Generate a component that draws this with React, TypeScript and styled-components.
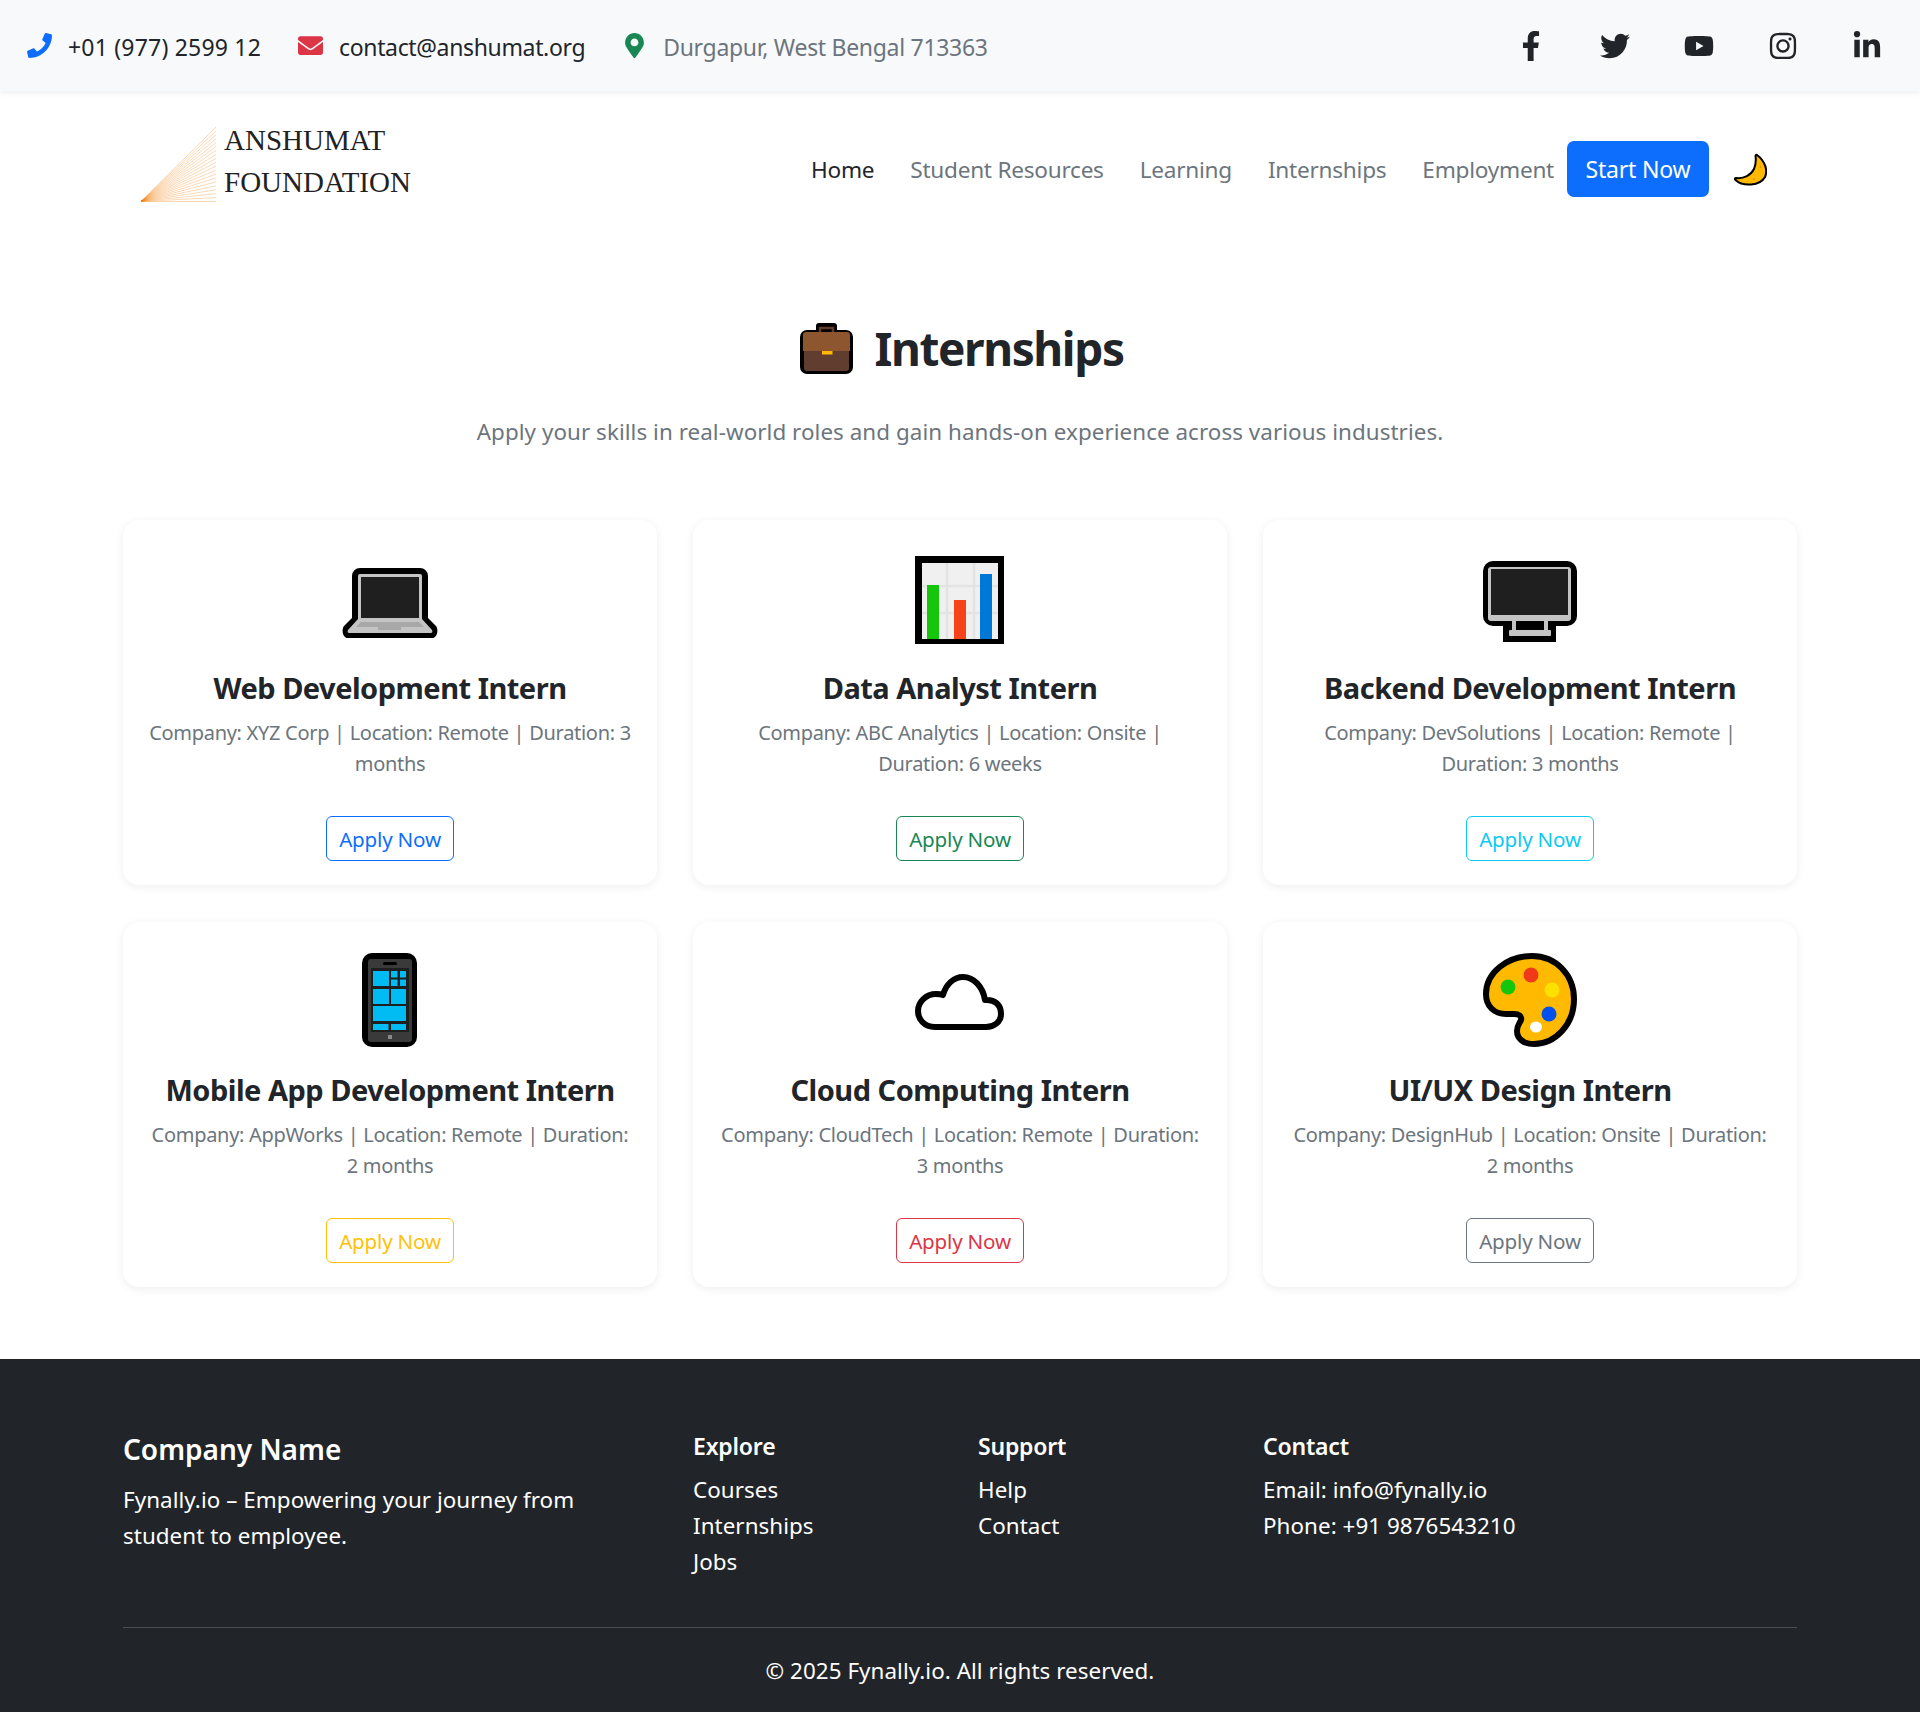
import styled, { createGlobalStyle } from 'styled-components';
import {
  FaPhone,
  FaEnvelope,
  FaMapMarkerAlt,
  FaFacebookF,
  FaTwitter,
  FaYoutube,
  FaInstagram,
  FaLinkedinIn,
} from 'react-icons/fa';
import type { ReactNode } from 'react';

const FONT = '"Noto Sans", "Open Sans", Arial, sans-serif';

const GlobalStyle = createGlobalStyle`
  html, body {
    margin: 0;
    padding: 0;
    background: #fff;
    font-family: ${FONT};
    font-size: 20px;
    line-height: 1.5;
    color: #212529;
  }
  * { box-sizing: border-box; }
`;

const LaptopIcon = () => (
  <EmojiSvg viewBox="0 0 96 96">
    <path d="M10 26a8 8 0 0 1 8-8h60a8 8 0 0 1 8 8v42l8 8c3 4 1 12-4 12H6c-5 0-7-8-4-12l8-8z" fill="#000" />
    <path d="M16 26a2 2 0 0 1 2-2h60a2 2 0 0 1 2 2v43l10 11c1 2 0 3-1 3H7c-1 0-2-1-1-3l10-11z" fill="#c4c4c4" />
    <rect x="19" y="27" width="58" height="41" fill="#1f1f1f" />
    <path d="M19 72h58l5 5H14z" fill="#a8a8a8" />
    <rect x="36" y="77" width="23" height="3" fill="#a8a8a8" />
  </EmojiSvg>
);

const ChartIcon = () => (
  <EmojiSvg viewBox="0 0 96 96">
    <rect x="3" y="6" width="89" height="88" fill="#000" />
    <rect x="10" y="13" width="76" height="76" fill="#f0f0f0" />
    <path d="M35 13v76M62 13v76M10 36h76M10 63h76" stroke="#e3e3e3" strokeWidth="2.5" />
    <rect x="15" y="35" width="12" height="54" fill="#16c60c" />
    <rect x="42" y="50" width="12" height="39" fill="#f7421a" />
    <rect x="68" y="24" width="12" height="65" fill="#0078d7" />
  </EmojiSvg>
);

const MonitorIcon = () => (
  <EmojiSvg viewBox="0 0 96 96">
    <rect x="1" y="11" width="94" height="65" rx="10" fill="#000" />
    <rect x="21" y="72" width="53" height="20" fill="#000" />
    <rect x="6" y="17" width="83" height="54" rx="3" fill="#c4c4c4" />
    <rect x="9" y="19" width="77" height="46" fill="#1f1f1f" />
    <rect x="30" y="71" width="4" height="9" fill="#c4c4c4" />
    <rect x="62" y="71" width="4" height="9" fill="#c4c4c4" />
    <rect x="27" y="80" width="42" height="6" rx="1" fill="#c4c4c4" />
  </EmojiSvg>
);

const PhoneIcon = () => (
  <EmojiSvg viewBox="0 0 96 96">
    <rect x="20" y="1" width="55" height="94" rx="10" fill="#000" />
    <rect x="26" y="7" width="44" height="83" rx="3" fill="#3a3a3a" />
    <rect x="41" y="10" width="14" height="3" rx="1.5" fill="#000" />
    <rect x="29" y="16" width="38" height="64" fill="#1f1f1f" />
    <g fill="#00bcf2">
      <rect x="31" y="19" width="16" height="15" />
      <rect x="49" y="19" width="6.5" height="6.5" />
      <rect x="58" y="19" width="6" height="6.5" />
      <rect x="49" y="27.5" width="6.5" height="6.5" />
      <rect x="58" y="27.5" width="6" height="6.5" />
      <rect x="31" y="37" width="16" height="15" />
      <rect x="49" y="37" width="15" height="15" />
      <rect x="31" y="54" width="33" height="15" />
      <rect x="31" y="72" width="15.5" height="6" />
      <rect x="49" y="72" width="15" height="6" />
    </g>
    <rect x="46" y="83" width="4" height="4" fill="#8a8a8a" />
  </EmojiSvg>
);

const CloudIcon = () => (
  <EmojiSvg viewBox="0 0 96 96">
    <path
      d="M23 75C12 75 6 67 6 59C6 50 14 42 24 42C27 42 29 42 31 43C34 32 42 25 51 25C62 25 71 35 73 48C83 47 89 53 89 62C89 70 82 75 74 75Z"
      fill="#fff"
      stroke="#000"
      strokeWidth="6"
      strokeLinejoin="round"
    />
  </EmojiSvg>
);

const PaletteIcon = () => (
  <EmojiSvg viewBox="0 0 96 96">
    <path
      d="M50 4C74 4 92 23 92 47C92 73 73 92 52 92C42 92 35 87 35 79C35 73 38 71 39 68C40 64 37 62 32 62L24 62C12 62 4 54 4 42C4 20 26 4 50 4Z"
      fill="#ffb900"
      stroke="#000"
      strokeWidth="6"
      strokeLinejoin="round"
    />
    <circle cx="26" cy="35" r="7.5" fill="#16c60c" />
    <circle cx="49" cy="23" r="7.5" fill="#f03a17" />
    <circle cx="70" cy="38" r="7.5" fill="#fce100" />
    <circle cx="67" cy="62" r="7.5" fill="#0050ef" />
    <ellipse cx="54" cy="75" rx="6" ry="5.5" fill="#fff" />
  </EmojiSvg>
);

const Briefcase = () => (
  <HeadingIcon viewBox="0 0 53 52">
    <path d="M16 7V3a3 3 0 0 1 3-3h15a3 3 0 0 1 3 3v4h9a7 7 0 0 1 7 7v30a7 7 0 0 1-7 7H7a7 7 0 0 1-7-7V14a7 7 0 0 1 7-7z" fill="#000" />
    <path d="M20 9V5h13v4" fill="none" stroke="#5f3d2c" strokeWidth="2.5" />
    <path d="M3 12a3 3 0 0 1 3-3h41a3 3 0 0 1 3 3v16H3z" fill="#8e562e" />
    <path d="M4 28h45v17a3 3 0 0 1-3 3H7a3 3 0 0 1-3-3z" fill="#613d30" />
    <rect x="22" y="28" width="10.5" height="3.5" fill="#ffb900" />
  </HeadingIcon>
);

const Moon = () => (
  <MoonSvg viewBox="0 0 34 33">
    <path
      d="M24 2C32 8 35 17 32 24C27 33 10 34 2.5 27C1.5 26 2 25 3 25C11 26 18 22 21 16C23 11 23 6 22.5 3C22.5 2 23 1.5 24 2Z"
      fill="#ffb900"
      stroke="#000"
      strokeWidth="2"
      strokeLinejoin="round"
    />
    <circle cx="27.5" cy="14" r="1" fill="#d99a00" />
    <circle cx="21" cy="26" r="1" fill="#d99a00" />
  </MoonSvg>
);

const LogoMark = () => (
  <LogoSvg viewBox="0 0 75 75">
    {Array.from({ length: 20 }, (_, i) => (
      <line key={i} x1="0" y1="74.5" x2="75" y2={(i * 74.5) / 19} stroke="#f57c00" strokeWidth="0.5" strokeOpacity="0.6" />
    ))}
  </LogoSvg>
);

const INTERNSHIPS: { title: string; text: string; color: string; icon: ReactNode }[] = [
  { title: 'Web Development Intern', text: 'Company: XYZ Corp | Location: Remote | Duration: 3 months', color: '#0d6efd', icon: <LaptopIcon /> },
  { title: 'Data Analyst Intern', text: 'Company: ABC Analytics | Location: Onsite | Duration: 6 weeks', color: '#198754', icon: <ChartIcon /> },
  { title: 'Backend Development Intern', text: 'Company: DevSolutions | Location: Remote | Duration: 3 months', color: '#0dcaf0', icon: <MonitorIcon /> },
  { title: 'Mobile App Development Intern', text: 'Company: AppWorks | Location: Remote | Duration: 2 months', color: '#ffc107', icon: <PhoneIcon /> },
  { title: 'Cloud Computing Intern', text: 'Company: CloudTech | Location: Remote | Duration: 3 months', color: '#dc3545', icon: <CloudIcon /> },
  { title: 'UI/UX Design Intern', text: 'Company: DesignHub | Location: Onsite | Duration: 2 months', color: '#6c757d', icon: <PaletteIcon /> },
];

const NAV_LINKS = ['Home', 'Student Resources', 'Learning', 'Internships', 'Employment'];

export default function App() {
  return (
    <>
      <GlobalStyle />
      <TopBar>
        <ContactList>
          <ContactItem $color="#212529" $iconColor="#0d6efd" $spacing="0.2px"><FaPhone /><span>+01 (977) 2599 12</span></ContactItem>
          <ContactItem $color="#212529" $iconColor="#dc3545" $spacing="-0.35px"><FaEnvelope /><span>contact@anshumat.org</span></ContactItem>
          <ContactItem $color="#6c757d" $iconColor="#198754" $spacing="-0.3px"><FaMapMarkerAlt /><span>Durgapur, West Bengal 713363</span></ContactItem>
        </ContactList>
        <SocialList>
          <SocialLink><FaFacebookF /></SocialLink>
          <SocialLink><FaTwitter /></SocialLink>
          <SocialLink><FaYoutube /></SocialLink>
          <SocialLink><FaInstagram /></SocialLink>
          <SocialLink><FaLinkedinIn /></SocialLink>
        </SocialList>
      </TopBar>

      <NavBar>
        <Logo>
          <LogoMark />
          <LogoText>
            <span>ANSHUMAT</span>
            <span>FOUNDATION</span>
          </LogoText>
        </Logo>
        <NavRight>
          {NAV_LINKS.map((link, i) => (
            <NavLink key={link} $active={i === 0}>{link}</NavLink>
          ))}
          <StartButton>Start Now</StartButton>
          <Moon />
        </NavRight>
      </NavBar>

      <Main>
        <Heading>
          <Briefcase />
          Internships
        </Heading>
        <Lead>Apply your skills in real-world roles and gain hands-on experience across various industries.</Lead>
        <CardGrid>
          {INTERNSHIPS.map((item) => (
            <Card key={item.title}>
              <IconSlot>{item.icon}</IconSlot>
              <CardTitle>{item.title}</CardTitle>
              <CardText>{item.text}</CardText>
              <ApplyButton $color={item.color}>Apply Now</ApplyButton>
            </Card>
          ))}
        </CardGrid>
      </Main>

      <Footer>
        <FooterGrid>
          <div>
            <BrandTitle>Company Name</BrandTitle>
            <BrandText>Fynally.io – Empowering your journey from student to employee.</BrandText>
          </div>
          <div>
            <ColumnTitle>Explore</ColumnTitle>
            <FooterLine>Courses</FooterLine>
            <FooterLine>Internships</FooterLine>
            <FooterLine>Jobs</FooterLine>
          </div>
          <div>
            <ColumnTitle>Support</ColumnTitle>
            <FooterLine>Help</FooterLine>
            <FooterLine>Contact</FooterLine>
          </div>
          <div>
            <ColumnTitle>Contact</ColumnTitle>
            <FooterLine>Email: info@fynally.io</FooterLine>
            <FooterLine>Phone: +91 9876543210</FooterLine>
          </div>
        </FooterGrid>
        <Copyright>© 2025 Fynally.io. All rights reserved.</Copyright>
      </Footer>
    </>
  );
}

const TopBar = styled.header`
  position: relative;
  display: flex;
  align-items: center;
  justify-content: space-between;
  height: 91px;
  padding: 0 11px 0 27px;
  background: #f8f9fa;
  box-shadow: 0 2px 6px rgba(0, 0, 0, 0.07);
`;

const ContactList = styled.div`
  display: flex;
  align-items: center;
  gap: 37px;
`;

const ContactItem = styled.div<{ $color: string; $iconColor: string; $spacing: string }>`
  display: flex;
  align-items: center;
  gap: 16px;
  font-size: 23px;
  letter-spacing: ${(p) => p.$spacing};
  color: ${(p) => p.$color};

  svg {
    height: 25px;
    width: auto;
    color: ${(p) => p.$iconColor};
  }

  span {
    padding-top: 4px;
  }
`;

const SocialList = styled.div`
  display: flex;
  color: #212529;
`;

const SocialLink = styled.a`
  display: flex;
  align-items: center;
  justify-content: center;
  width: 84px;

  svg {
    height: 30px;
    width: auto;
  }
`;

const NavBar = styled.nav`
  display: flex;
  align-items: center;
  justify-content: space-between;
  height: 156px;
  padding: 0 153px 0 141px;
`;

const Logo = styled.div`
  display: flex;
  align-items: flex-end;
  gap: 8px;
  margin-bottom: 12px;
`;

const LogoSvg = styled.svg`
  display: block;
  width: 75px;
  height: 75px;
`;

const LogoText = styled.div`
  display: flex;
  flex-direction: column;
  gap: 10px;
  padding-bottom: 4px;
  font-family: "Liberation Serif", serif;
  font-size: 29px;
  line-height: 32px;
  color: #222;
`;

const NavRight = styled.div`
  display: flex;
  align-items: center;
`;

const NavLink = styled.a<{ $active: boolean }>`
  padding: 1px 18px 0;
  font-size: 22.6px;
  letter-spacing: -0.25px;
  color: ${(p) => (p.$active ? '#212529' : '#6c757d')};
`;

const StartButton = styled.button`
  height: 56px;
  width: 142px;
  margin: 0 24px 0 -5px;
  padding: 0;
  border: 0;
  border-radius: 7px;
  background: #0d6efd;
  color: #fff;
  font-family: ${FONT};
  font-size: 23px;
  letter-spacing: -0.2px;
`;

const MoonSvg = styled.svg`
  display: block;
  width: 34px;
  height: 33px;
`;

const Main = styled.main`
  padding: 0 123px 72px;
`;

const Heading = styled.h1`
  display: flex;
  align-items: center;
  justify-content: center;
  gap: 21px;
  margin: 0;
  padding: 62px 0 0 4px;
  font-size: 46px;
  font-weight: 700;
  line-height: 78px;
  letter-spacing: -1.4px;
  color: #212529;
`;

const HeadingIcon = styled.svg`
  display: block;
  width: 53px;
  height: 52px;
  margin-top: 2px;
`;

const Lead = styled.p`
  margin: 28px 0 71px;
  text-align: center;
  font-size: 22.4px;
  line-height: 34px;
  letter-spacing: 0.06px;
  color: #6c757d;
`;

const CardGrid = styled.div`
  display: grid;
  grid-template-columns: repeat(3, 1fr);
  gap: 37px 36px;
`;

const Card = styled.article`
  display: flex;
  flex-direction: column;
  align-items: center;
  height: 365px;
  padding: 30px 24px 0;
  border-radius: 16px;
  background: #fff;
  box-shadow: 0 2px 10px rgba(0, 0, 0, 0.07);
  text-align: center;
`;

const IconSlot = styled.div`
  width: 96px;
  height: 96px;
`;

const EmojiSvg = styled.svg`
  display: block;
  width: 96px;
  height: 96px;
`;

const CardTitle = styled.h3`
  margin: 22px 0 0;
  font-size: 29px;
  font-weight: 700;
  line-height: 40px;
  letter-spacing: -0.5px;
  color: #212529;
`;

const CardText = styled.p`
  margin: 9px 0 0;
  font-size: 20px;
  line-height: 31px;
  letter-spacing: -0.3px;
  color: #6c757d;
`;

const ApplyButton = styled.button<{ $color: string }>`
  width: 128px;
  height: 45px;
  margin-top: 37px;
  padding: 0;
  border: 1px solid ${(p) => p.$color};
  border-radius: 6px;
  background: transparent;
  color: ${(p) => p.$color};
  font-family: ${FONT};
  font-size: 20.6px;
  letter-spacing: -0.2px;
`;

const Footer = styled.footer`
  padding: 70px 123px 0;
  height: 353px;
  background: #212529;
  color: #fff;
`;

const FooterGrid = styled.div`
  display: grid;
  grid-template-columns: 570px 285px 285px 1fr;
  height: 199px;
  border-bottom: 1px solid #4b4f54;
`;

const BrandTitle = styled.h4`
  margin: 0 0 13px;
  font-size: 28px;
  font-weight: 600;
  line-height: 40px;
  letter-spacing: 0;
`;

const BrandText = styled.p`
  margin: 0;
  max-width: 490px;
  font-size: 22.4px;
  line-height: 36px;
  letter-spacing: 0.05px;
`;

const ColumnTitle = styled.h5`
  margin: 0 0 9px;
  font-size: 23px;
  font-weight: 600;
  line-height: 34px;
  letter-spacing: -0.2px;
`;

const FooterLine = styled.div`
  font-size: 22.4px;
  line-height: 36px;
  letter-spacing: 0.05px;
`;

const Copyright = styled.p`
  margin: 0;
  padding-top: 25px;
  text-align: center;
  font-size: 22.4px;
  line-height: 36px;
  letter-spacing: 0.05px;
`;
